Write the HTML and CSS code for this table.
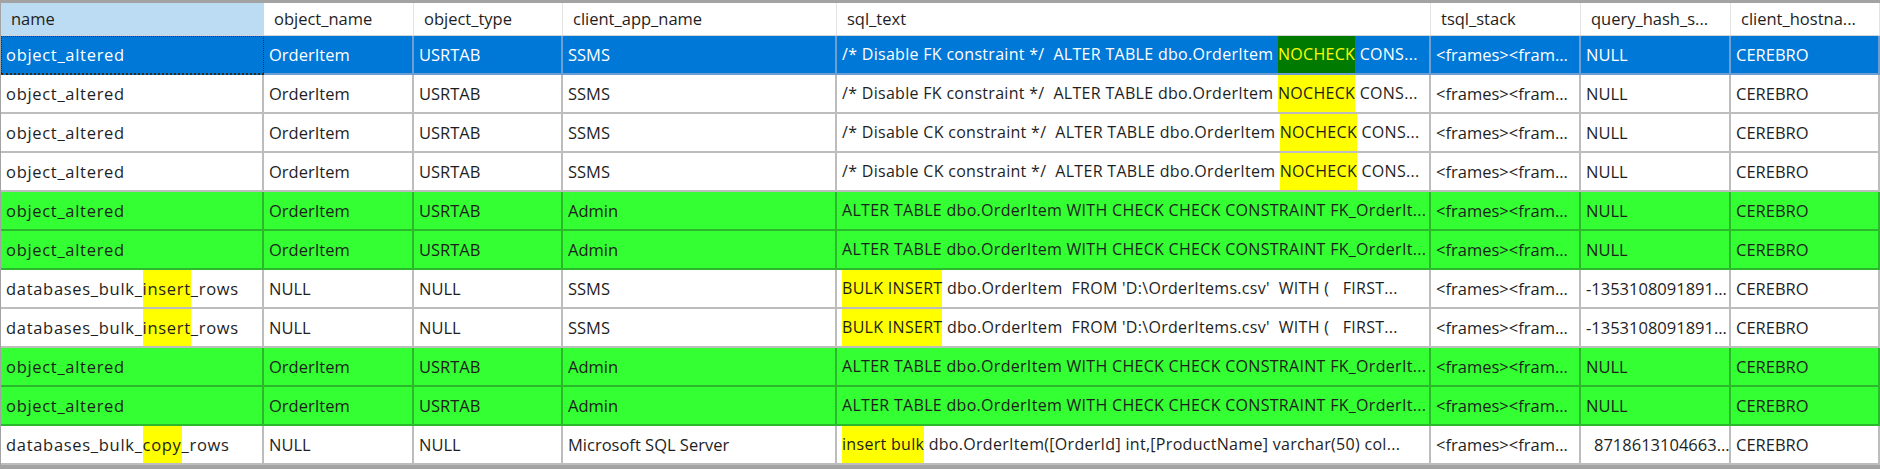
FILE: index.html
```html
<!DOCTYPE html>
<html>
<head>
<meta charset="utf-8">
<link rel="stylesheet" href="styles.css">
</head>
<body>
<div class="grid">
  <div class="hd sorted">name</div>
  <div class="hd">object_name</div>
  <div class="hd">object_type</div>
  <div class="hd">client_app_name</div>
  <div class="hd">sql_text</div>
  <div class="hd">tsql_stack</div>
  <div class="hd">query_hash_s...</div>
  <div class="hd">client_hostna...</div>

  <div class="c n sel focus">object_altered</div>
  <div class="c sel">OrderItem</div>
  <div class="c sel">USRTAB</div>
  <div class="c sel">SSMS</div>
  <div class="c s sel">/* Disable FK constraint */  ALTER TABLE dbo.OrderItem <span class="hl hl-sel">NOCHECK</span> CONS...</div>
  <div class="c sel">&lt;frames&gt;&lt;fram...</div>
  <div class="c sel">NULL</div>
  <div class="c sel">CEREBRO</div>

  <div class="c n">object_altered</div>
  <div class="c">OrderItem</div>
  <div class="c">USRTAB</div>
  <div class="c">SSMS</div>
  <div class="c s">/* Disable FK constraint */  ALTER TABLE dbo.OrderItem <span class="hl">NOCHECK</span> CONS...</div>
  <div class="c">&lt;frames&gt;&lt;fram...</div>
  <div class="c">NULL</div>
  <div class="c">CEREBRO</div>

  <div class="c n">object_altered</div>
  <div class="c">OrderItem</div>
  <div class="c">USRTAB</div>
  <div class="c">SSMS</div>
  <div class="c s">/* Disable CK constraint */  ALTER TABLE dbo.OrderItem <span class="hl">NOCHECK</span> CONS...</div>
  <div class="c">&lt;frames&gt;&lt;fram...</div>
  <div class="c">NULL</div>
  <div class="c">CEREBRO</div>

  <div class="c n">object_altered</div>
  <div class="c">OrderItem</div>
  <div class="c">USRTAB</div>
  <div class="c">SSMS</div>
  <div class="c s">/* Disable CK constraint */  ALTER TABLE dbo.OrderItem <span class="hl">NOCHECK</span> CONS...</div>
  <div class="c">&lt;frames&gt;&lt;fram...</div>
  <div class="c">NULL</div>
  <div class="c">CEREBRO</div>

  <div class="c n g">object_altered</div>
  <div class="c g">OrderItem</div>
  <div class="c g">USRTAB</div>
  <div class="c g">Admin</div>
  <div class="c s g">ALTER TABLE dbo.OrderItem WITH CHECK CHECK CONSTRAINT FK_OrderIt...</div>
  <div class="c g">&lt;frames&gt;&lt;fram...</div>
  <div class="c g">NULL</div>
  <div class="c g">CEREBRO</div>

  <div class="c n g">object_altered</div>
  <div class="c g">OrderItem</div>
  <div class="c g">USRTAB</div>
  <div class="c g">Admin</div>
  <div class="c s g">ALTER TABLE dbo.OrderItem WITH CHECK CHECK CONSTRAINT FK_OrderIt...</div>
  <div class="c g">&lt;frames&gt;&lt;fram...</div>
  <div class="c g">NULL</div>
  <div class="c g">CEREBRO</div>

  <div class="c n">databases_bulk_<span class="hl">insert</span>_rows</div>
  <div class="c">NULL</div>
  <div class="c">NULL</div>
  <div class="c">SSMS</div>
  <div class="c s"><span class="hl">BULK INSERT</span> dbo.OrderItem  FROM 'D:\OrderItems.csv'  WITH (   FIRST...</div>
  <div class="c">&lt;frames&gt;&lt;fram...</div>
  <div class="c">-1353108091891...</div>
  <div class="c">CEREBRO</div>

  <div class="c n">databases_bulk_<span class="hl">insert</span>_rows</div>
  <div class="c">NULL</div>
  <div class="c">NULL</div>
  <div class="c">SSMS</div>
  <div class="c s"><span class="hl">BULK INSERT</span> dbo.OrderItem  FROM 'D:\OrderItems.csv'  WITH (   FIRST...</div>
  <div class="c">&lt;frames&gt;&lt;fram...</div>
  <div class="c">-1353108091891...</div>
  <div class="c">CEREBRO</div>

  <div class="c n g">object_altered</div>
  <div class="c g">OrderItem</div>
  <div class="c g">USRTAB</div>
  <div class="c g">Admin</div>
  <div class="c s g">ALTER TABLE dbo.OrderItem WITH CHECK CHECK CONSTRAINT FK_OrderIt...</div>
  <div class="c g">&lt;frames&gt;&lt;fram...</div>
  <div class="c g">NULL</div>
  <div class="c g">CEREBRO</div>

  <div class="c n g">object_altered</div>
  <div class="c g">OrderItem</div>
  <div class="c g">USRTAB</div>
  <div class="c g">Admin</div>
  <div class="c s g">ALTER TABLE dbo.OrderItem WITH CHECK CHECK CONSTRAINT FK_OrderIt...</div>
  <div class="c g">&lt;frames&gt;&lt;fram...</div>
  <div class="c g">NULL</div>
  <div class="c g">CEREBRO</div>

  <div class="c n">databases_bulk_<span class="hl">copy</span>_rows</div>
  <div class="c">NULL</div>
  <div class="c">NULL</div>
  <div class="c">Microsoft SQL Server</div>
  <div class="c s"><span class="hl">insert bulk</span> dbo.OrderItem([OrderId] int,[ProductName] varchar(50) col...</div>
  <div class="c">&lt;frames&gt;&lt;fram...</div>
  <div class="c num">8718613104663...</div>
  <div class="c">CEREBRO</div>
</div>
</body>
</html>
```
FILE: styles.css
```css
html, body {
  margin: 0;
  padding: 0;
}
body {
  background: #a3a3a3;
  width: 1880px;
  height: 469px;
  overflow: hidden;
  font-family: "Open Sans", "Noto Sans", sans-serif;
  font-size: 16.5px;
  color: #1e1e1e;
}
.grid {
  margin-top: 3px;
  margin-left: 1px;
  display: grid;
  grid-template-columns: 263px 150px 149px 274px 594px 150px 150px 149px;
  grid-auto-rows: 39px;
  grid-template-rows: 33px;
}
.hd {
  background: #ffffff;
  border-right: 1px solid #e3e3e3;
  border-bottom: 1px solid #d4d4d4;
  padding-left: 10px;
  line-height: 32px;
  white-space: pre;
  overflow: hidden;
}
.hd.sorted {
  background: #bcdcf4;
  border-right-color: #bcdcf4;
}
.c {
  box-sizing: border-box;
  background: #ffffff;
  border-right: 2px solid #bdbdbd;
  border-bottom: 2px solid #bdbdbd;
  padding-left: 5px;
  line-height: 37px;
  white-space: pre;
  overflow: hidden;
}
.c.n {
  letter-spacing: 0.7px;
}
.c.s {
  font-size: 16px;
  letter-spacing: 0.3px;
}
.c.sel {
  background: #0078d7;
  color: #ffffff;
  border-right-color: #6c9fd0;
  border-bottom-color: #6c9fd0;
}
.c.focus {
  border: 1px dotted #3a2a10;
  border-bottom-width: 2px;
  line-height: 36px;
  padding-left: 4px;
}
.c.g {
  background: #33ff33;
  border-right-color: #2cb82c;
  border-bottom-color: #2cb82c;
}
.c.num {
  padding-left: 13px;
}
.hl {
  display: inline-block;
  background: #ffff00;
  height: 37px;
  vertical-align: top;
}
.hl.hl-sel {
  background: #007a00;
  color: #ffff00;
}
```
